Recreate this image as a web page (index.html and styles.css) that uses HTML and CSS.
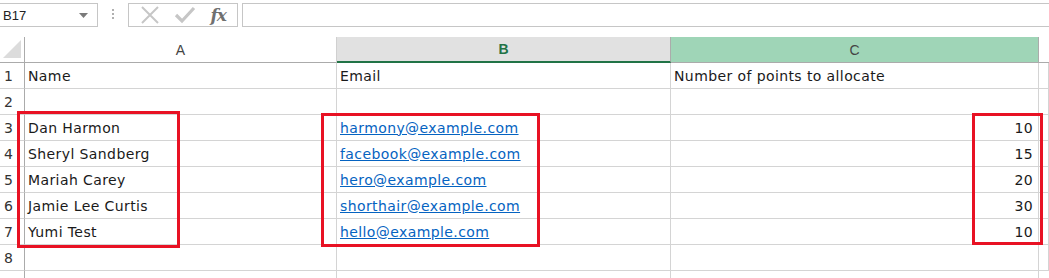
FILE: index.html
```html
<!DOCTYPE html>
<html lang="en">

<head>
  <meta charset="UTF-8">
  <title>Points allocation sheet</title>
  <link rel="stylesheet" href="styles.css">
</head>

<body>
  <!-- Formula bar -->
  <div class="formula-bar">
    <div class="name-box">
      <span>B17</span>
      <svg class="caret" width="9" height="5" viewBox="0 0 9 5"><polygon points="0,0 9,0 4.5,5" fill="#7a7a7a"/></svg>
    </div>
    <div class="grip"><i></i><i></i><i></i></div>
    <div class="fx-box">
      <svg width="20" height="20" viewBox="0 0 20 20"><path d="M2 2 L18 18 M18 2 L2 18" stroke="#c6c6c6" stroke-width="2" fill="none"/></svg>
      <svg width="22" height="20" viewBox="0 0 22 20"><path d="M2 10 L8 16 L20 3" stroke="#c6c6c6" stroke-width="3.2" fill="none"/></svg>
      <span class="fx">fx</span>
    </div>
    <div class="formula-input"></div>
  </div>

  <!-- Sheet -->
  <div class="sheet-wrap">
    <div class="sheet">
      <div class="hd corner">
        <svg width="24" height="25" viewBox="0 0 24 25"><polygon points="3,21 21,21 21,3" fill="#dcdcdc"/></svg>
      </div>
      <div class="hd">A</div>
      <div class="hd sel">B</div>
      <div class="hd active">C</div>
      <div class="hd blank"></div>

      <div class="rn">1</div><div class="c">Name</div><div class="c">Email</div><div class="c">Number of points to allocate</div><div class="c"></div>
      <div class="rn">2</div><div class="c"></div><div class="c"></div><div class="c"></div><div class="c"></div>
      <div class="rn">3</div><div class="c">Dan Harmon</div><div class="c"><a href="#">harmony@example.com</a></div><div class="c num">10</div><div class="c"></div>
      <div class="rn">4</div><div class="c">Sheryl Sandberg</div><div class="c"><a href="#">facebook@example.com</a></div><div class="c num">15</div><div class="c"></div>
      <div class="rn">5</div><div class="c">Mariah Carey</div><div class="c"><a href="#">hero@example.com</a></div><div class="c num">20</div><div class="c"></div>
      <div class="rn">6</div><div class="c">Jamie Lee Curtis</div><div class="c"><a href="#">shorthair@example.com</a></div><div class="c num">30</div><div class="c"></div>
      <div class="rn">7</div><div class="c">Yumi Test</div><div class="c"><a href="#">hello@example.com</a></div><div class="c num">10</div><div class="c"></div>
      <div class="rn">8</div><div class="c"></div><div class="c"></div><div class="c"></div><div class="c"></div>
    </div>

    <!-- Red highlight boxes -->
    <div class="mark mark-a"></div>
    <div class="mark mark-b"></div>
    <div class="mark mark-c"></div>
  </div>
</body>

</html>
```

FILE: styles.css
```css
body {
  margin: 0;
  background: #fff;
  font-family: "DejaVu Sans", sans-serif;
  overflow: hidden;
}

/* Formula bar */
.formula-bar {
  display: flex;
  align-items: flex-start;
  height: 37px;
  padding-top: 3px;
  box-sizing: border-box;
}

.name-box {
  width: 98px;
  height: 24px;
  box-sizing: border-box;
  border: 1px solid #c6c6c6;
  border-left: none;
  display: flex;
  align-items: center;
  justify-content: space-between;
  padding: 0 9px 0 3px;
  font-family: "Liberation Sans", sans-serif;
  font-size: 13px;
  color: #222;
}

.grip {
  width: 30px;
  display: flex;
  flex-direction: column;
  align-items: center;
  gap: 2px;
  padding-top: 6px;
}

.grip i {
  width: 2px;
  height: 2px;
  background: #b0b0b0;
}

.fx-box {
  width: 110px;
  height: 24px;
  box-sizing: border-box;
  border: 1px solid #c6c6c6;
  display: flex;
  align-items: center;
  justify-content: space-around;
  padding: 0 4px;
}

.fx {
  font-family: "DejaVu Serif", serif;
  font-style: italic;
  font-weight: bold;
  font-size: 17px;
  color: #707070;
  letter-spacing: -1px;
}

.formula-input {
  flex: 1;
  height: 24px;
  margin-left: 4px;
  box-sizing: border-box;
  border: 1px solid #c6c6c6;
  border-right: none;
}

/* Sheet grid */
.sheet-wrap {
  position: relative;
  height: 241px;
  overflow: hidden;
}

.sheet {
  display: grid;
  grid-template-columns: 25px 312px 334px 368px 1fr;
  grid-template-rows: repeat(9, 26px) 26px;
  font-size: 14px;
  letter-spacing: 0.4px;
  color: #1a1a1a;
}

.sheet > div {
  border-right: 1px solid #d4d4d4;
  border-bottom: 1px solid #d4d4d4;
  box-sizing: border-box;
  display: flex;
  align-items: center;
  white-space: nowrap;
  overflow: hidden;
}

.sheet::after {
  content: "";
  grid-column: 1 / -1;
  border-top: none;
  background: linear-gradient(to right, transparent 24px, #ababab 24px, #ababab 25px, transparent 25px,
    transparent 336px, #d4d4d4 336px, #d4d4d4 337px, transparent 337px,
    transparent 670px, #d4d4d4 670px, #d4d4d4 671px, transparent 671px,
    transparent 1038px, #d4d4d4 1038px, #d4d4d4 1039px, transparent 1039px);
}

.hd {
  justify-content: center;
  color: #444;
  font-family: "Liberation Sans", sans-serif;
  font-size: 14px;
  letter-spacing: 0;
  border-bottom-color: #ababab !important;
  border-right-color: #d0d0d0 !important;
}

.hd.corner {
  border-right-color: #ababab !important;
}

.hd.sel {
  background: #e1e1e1;
  color: #217346;
  font-weight: bold;
  border-right-color: #ababab !important;
  border-bottom: 2px solid #217346 !important;
}

.hd.active {
  background: #9fd5b7;
  border-right-color: #ababab !important;
}

.hd.blank {
  border-right: none !important;
}

.rn {
  padding-left: 4px;
  color: #333;
  letter-spacing: 0;
  border-right-color: #ababab !important;
}

.c {
  padding: 0 5px 0 3px;
}

.c.num {
  justify-content: flex-end;
}

.c a {
  color: #0563c1;
  text-decoration: underline;
}

/* Red highlight boxes over the cells */
.mark {
  position: absolute;
  border: 3px solid #e81123;
  box-sizing: border-box;
}

.mark-a { left: 17px; top: 74px; width: 163px; height: 137px; }
.mark-b { left: 321px; top: 76px; width: 219px; height: 134px; }
.mark-c { left: 972px; top: 76px; width: 71px; height: 132px; }
```
